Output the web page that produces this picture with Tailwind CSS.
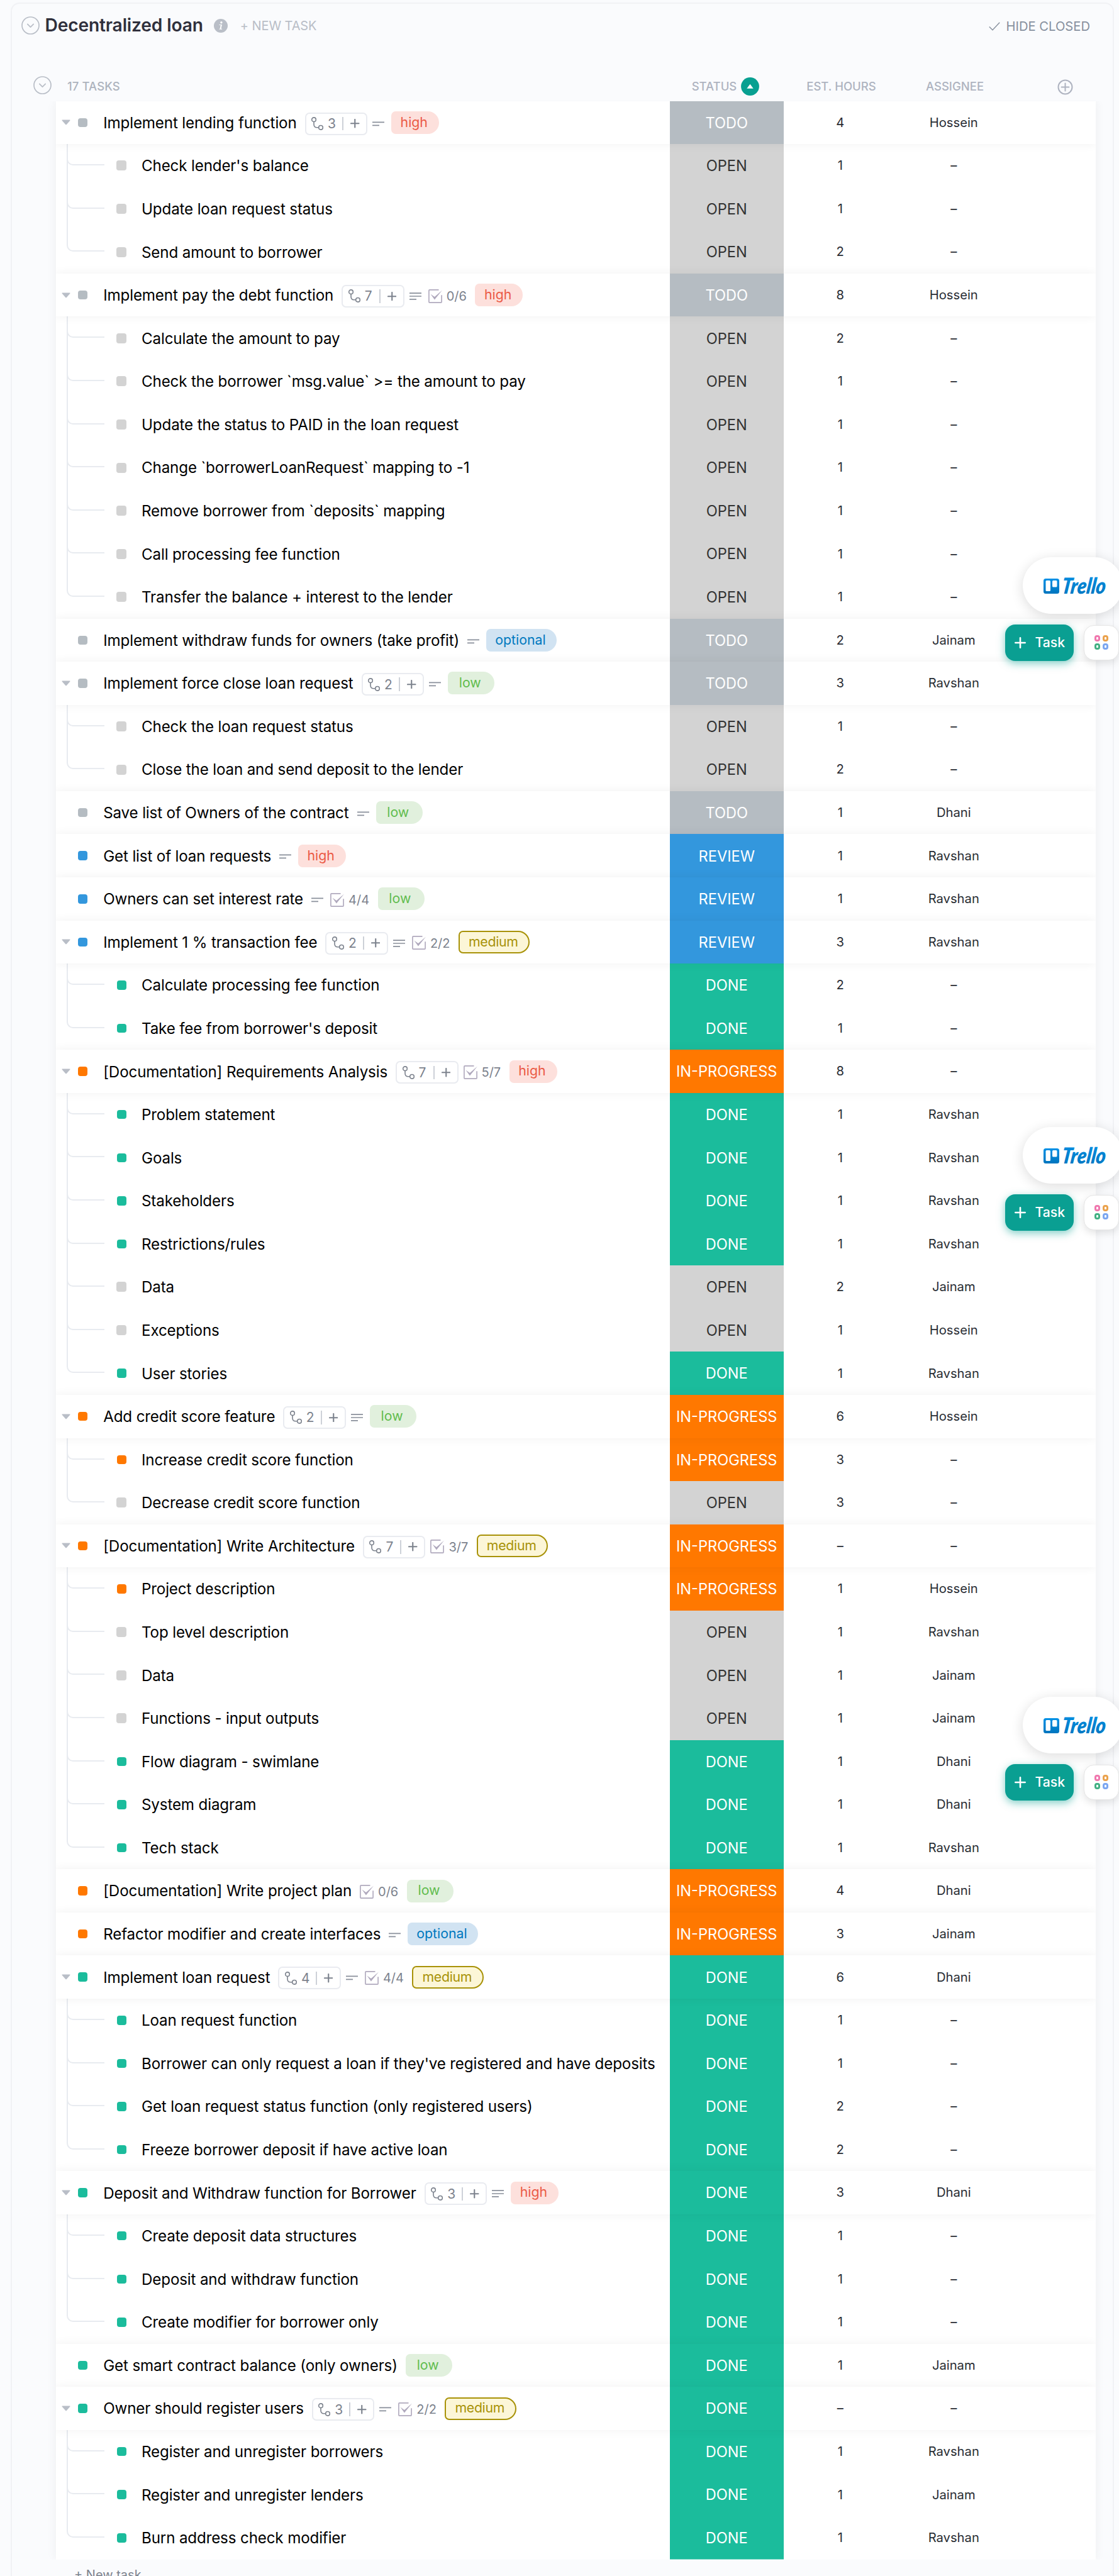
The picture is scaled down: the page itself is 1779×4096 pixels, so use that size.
<!DOCTYPE html>
<html lang="en">
<head>
<meta charset="utf-8">
<title>Decentralized loan</title>
<script src="https://cdn.jsdelivr.net/npm/@tailwindcss/browser@4"></script>
</head>
<body class="relative h-[4096px] w-[1779px] overflow-hidden bg-[#fafbfd] font-['Inter','Liberation_Sans',sans-serif]">
<main class="ml-[17px] mt-[4px] flex h-[4110px] w-[1754px] flex-col rounded-[14px] border-2 border-[#f1f2f5]">
  <header class="flex h-[69px] shrink-0 items-center pl-[15px] pr-[36px]">
    <svg class="size-[29px] shrink-0" viewBox="0 0 29 29" fill="none" stroke="#b9bec7" stroke-width="1.7"><circle cx="14.5" cy="14.5" r="13.5"/><path d="M9.8 12.3l4.7 4.8 4.7-4.8" stroke-linecap="round" stroke-linejoin="round"/></svg>
    <h1 class="ml-[8.500px] whitespace-nowrap text-[28.2px] font-semibold leading-none tracking-[-0.16px] text-[#30303c]">Decentralized loan</h1>
    <svg class="ml-[17px] size-[22px] shrink-0" viewBox="0 0 22 22"><circle cx="11" cy="11" r="11" fill="#b9bec7"/><circle cx="11.9" cy="5.7" r="1.7" fill="#fff"/><path d="M8.6 9h4.4l-1.5 6.7h1.6v1.1H8.5l.3-1.1h.8l1.2-5.6H8.4z" fill="#fff"/></svg>
    <span class="ml-[20px] whitespace-nowrap text-[20px] leading-none tracking-[-0.1px] text-[#b9bec7]">+ NEW TASK</span>
    <div class="ml-auto mt-[4px] flex items-center gap-[10px] text-[20.2px] leading-none text-[#87909e]">
      <svg class="h-[14px] w-[18px]" viewBox="0 0 18 14" fill="none" stroke="#87909e" stroke-width="1.4"><path d="M.8 7.5L6 12.8 17.2.8"/></svg>
      <span>HIDE CLOSED</span>
    </div>
  </header>
  <div class="mt-[42px] flex h-[43.6px] shrink-0 items-start text-[18.5px] font-medium leading-[30px] text-[#adb3bd]">
    <svg class="ml-[33.5px] mt-[4px] size-[29px] shrink-0" viewBox="0 0 29 29" fill="none" stroke="#b9bec7" stroke-width="1.7"><circle cx="14.5" cy="14.5" r="13.5"/><path d="M9.8 12.3l4.7 4.8 4.7-4.8" stroke-linecap="round" stroke-linejoin="round"/></svg>
    <span class="mt-[5px] w-[984px] shrink-0 pl-[25.5px] tracking-[0.1px]">17 TASKS</span>
    <div class="mt-[5px] flex w-[176px] shrink-0 items-center justify-center gap-[7px] text-[#aeb3c0]">STATUS
      <svg class="size-[29px]" viewBox="0 0 29 29"><circle cx="14.5" cy="14.5" r="14.4" fill="#08a091"/><path d="M14.5 10.8l5.2 7H9.3z" fill="#fff"/></svg>
    </div>
    <span class="mt-[5px] w-[192px] shrink-0 text-center text-[#aeb3c0]">EST. HOURS</span>
    <span class="mt-[5px] w-[169px] shrink-0 text-center text-[#aeb3c0]">ASSIGNEE</span>
    <svg class="ml-[78.5px] mt-[9px] size-[25px] shrink-0" viewBox="0 0 25 25" fill="none" stroke="#aeb3c0" stroke-width="2"><circle cx="12.5" cy="12.5" r="11"/><path d="M12.5 6.6v11.8M6.6 12.5h11.8" stroke-linecap="round"/></svg>
  </div>
  <section class="ml-[69.5px] w-[1653px] shrink-0 bg-white shadow-[0_0_16px_rgba(0,0,0,0.055)] [clip-path:inset(0_-20px)]">
    <div id="rows" class="overflow-hidden"></div>
  </section>
  <p class="ml-[99px] mt-[10px] text-[20px] leading-[28px] text-[#7c828d]">+ New task</p>
</main>
<div id="float"></div>

<script>
const STATUS = {
  T: ['TODO', 'bg-[#b5bcc2]', 'text-white'],
  O: ['OPEN', 'bg-[#d3d3d3]', 'text-[#333333]'],
  R: ['REVIEW', 'bg-[#3397dd]', 'text-white'],
  P: ['IN-PROGRESS', 'bg-[#ff7800]', 'text-white'],
  D: ['DONE', 'bg-[#1bbc9c]', 'text-white']
};
const TAG = {
  high: 'bg-[#fde0dc] text-[#eb5a46] pl-[14.5px] pr-[18px]',
  low: 'bg-[#e1f0dd] text-[#61bd4f] pl-[14.5px] pr-[18px]',
  optional: 'bg-[#d1e3f2] text-[#0079bf] pl-[14px] pr-[17.5px]',
  medium: 'bg-[#fcf6d7] text-[#a89208] border-2 border-[#a89208] pl-[14px] pr-[16.5px] tracking-[-0.3px]'
};
// Top-level task: [status, title, hours, assignee, {subtasks, description lines, checklist, tag}, children]
const H = 'Hossein', J = 'Jainam', V = 'Ravshan', D = 'Dhani', N = '–';
const TASKS = [
  ['T', 'Implement lending function', 4, H, {s: 3, l: 2, t: 'high'}, [
    ['O', "Check lender's balance", 1, N], ['O', 'Update loan request status', 1, N], ['O', 'Send amount to borrower', 2, N]]],
  ['T', 'Implement pay the debt function', 8, H, {s: 7, l: 3, c: '0/6', t: 'high'}, [
    ['O', 'Calculate the amount to pay', 2, N], ['O', 'Check the borrower `msg.value` &gt;= the amount to pay', 1, N],
    ['O', 'Update the status to PAID in the loan request', 1, N], ['O', 'Change `borrowerLoanRequest` mapping to -1', 1, N],
    ['O', 'Remove borrower from `deposits` mapping', 1, N], ['O', 'Call processing fee function', 1, N],
    ['O', 'Transfer the balance + interest to the lender', 1, N]]],
  ['T', 'Implement withdraw funds for owners (take profit)', 2, J, {l: 2, t: 'optional'}, []],
  ['T', 'Implement force close loan request', 3, V, {s: 2, l: 2, t: 'low'}, [
    ['O', 'Check the loan request status', 1, N], ['O', 'Close the loan and send deposit to the lender', 2, N]]],
  ['T', 'Save list of Owners of the contract', 1, D, {l: 2, t: 'low'}, []],
  ['R', 'Get list of loan requests', 1, V, {l: 2, t: 'high'}, []],
  ['R', 'Owners can set interest rate', 1, V, {l: 2, c: '4/4', t: 'low'}, []],
  ['R', 'Implement 1 % transaction fee', 3, V, {s: 2, l: 3, c: '2/2', t: 'medium'}, [
    ['D', 'Calculate processing fee function', 2, N], ['D', "Take fee from borrower's deposit", 1, N]]],
  ['P', '[Documentation] Requirements Analysis', 8, N, {s: 7, c: '5/7', t: 'high'}, [
    ['D', 'Problem statement', 1, V], ['D', 'Goals', 1, V], ['D', 'Stakeholders', 1, V], ['D', 'Restrictions/rules', 1, V],
    ['O', 'Data', 2, J], ['O', 'Exceptions', 1, H], ['D', 'User stories', 1, V]]],
  ['P', 'Add credit score feature', 6, H, {s: 2, l: 3, t: 'low'}, [
    ['P', 'Increase credit score function', 3, N], ['O', 'Decrease credit score function', 3, N]]],
  ['P', '[Documentation] Write Architecture', N, N, {s: 7, c: '3/7', t: 'medium'}, [
    ['P', 'Project description', 1, H], ['O', 'Top level description', 1, V], ['O', 'Data', 1, J],
    ['O', 'Functions - input outputs', 1, J], ['D', 'Flow diagram - swimlane', 1, D], ['D', 'System diagram', 1, D], ['D', 'Tech stack', 1, V]]],
  ['P', '[Documentation] Write project plan', 4, D, {c: '0/6', t: 'low'}, []],
  ['P', 'Refactor modifier and create interfaces', 3, J, {l: 2, t: 'optional'}, []],
  ['D', 'Implement loan request', 6, D, {s: 4, l: 2, c: '4/4', t: 'medium'}, [
    ['D', 'Loan request function', 1, N], ['D', "Borrower can only request a loan if they've registered and have deposits", 1, N],
    ['D', 'Get loan request status function (only registered users)', 2, N], ['D', 'Freeze borrower deposit if have active loan', 2, N]]],
  ['D', 'Deposit and Withdraw function for Borrower', 3, D, {s: 3, l: 3, t: 'high'}, [
    ['D', 'Create deposit data structures', 1, N], ['D', 'Deposit and withdraw function', 1, N], ['D', 'Create modifier for borrower only', 1, N]]],
  ['D', 'Get smart contract balance (only owners)', 1, J, {t: 'low'}, []],
  ['D', 'Owner should register users', N, N, {s: 3, l: 2, c: '2/2', t: 'medium'}, [
    ['D', 'Register and unregister borrowers', 1, V], ['D', 'Register and unregister lenders', 1, J], ['D', 'Burn address check modifier', 1, V]]]
];

const subtaskBox = n => `
  <div class="mr-[8px] mt-[3.5px] flex h-[36px] w-[99.5px] items-center rounded-[7px] border-2 border-[#e9ebf0] pl-[8.5px] pr-[10.5px] text-[21px] text-[#7c828d]">
    <svg class="h-[21px] w-[19px] shrink-0" viewBox="0 0 19 21" fill="none" stroke="#7c828d" stroke-width="1.6"><circle cx="4" cy="4.2" r="3.3"/><circle cx="15" cy="16.8" r="3.3"/><path d="M4 7.5v4.3c0 3.2 1.8 5 5 5h2.7"/></svg>
    <span class="ml-[7px] leading-none">${n}</span>
    <span class="ml-auto h-[21.6px] w-[2px] shrink-0 bg-[#cdd1d8]"></span>
    <svg class="ml-[11px] size-[14.5px] shrink-0" viewBox="0 0 14.5 14.5" stroke="#7c828d" stroke-width="2.1" stroke-linecap="round"><path d="M7.25 1v12.5M1 7.25h12.5"/></svg>
  </div>`;
const lines = n => `
  <svg class="mr-[11px] mt-[3.5px] h-[14px] w-[19px]" viewBox="0 0 19 14" fill="none" stroke="#8a909b" stroke-width="1.7">
    <path d="${n === 3 ? 'M0 2.2h19M0 7h19M0 11.8h11' : 'M0 4.4h19M0 9.4h11'}"/></svg>`;
const checklist = t => `
  <svg class="mt-[3px] h-[22px] w-[22px]" viewBox="0 0 24 24" fill="none"><path d="M18 1H2.2Q1 1 1 2.2V21.8Q1 23 2.2 23H21.8Q23 23 23 21.8V10" stroke="#b0a9bd" stroke-width="1.8"/><path d="M3.8 8.3L10.8 13.2 24 1.6 10.8 18z" fill="#b0a9bd"/></svg>
  <span class="ml-[7px] mr-[13.5px] mt-[3.5px] text-[20px] leading-none text-[#7c828d]">${t}</span>`;
const tag = t => `
  <span class="flex h-[36px] min-w-[74px] items-center justify-center rounded-l-[7px] rounded-r-[18px] pb-px text-[21.3px] leading-none ${TAG[t]}">${t}</span>`;

const cells = (s, h, a) => `
  <div class="flex w-[180.5px] items-center justify-center pt-px text-[23.6px] ${STATUS[s][1]} ${STATUS[s][2]}">${STATUS[s][0]}</div>
  <div class="flex w-[180.5px] items-center justify-center text-[20.2px] text-[#292d34]">${h}</div>
  <div class="flex w-[180.5px] items-center justify-center text-[20.2px] text-[#292d34]">${a}</div>
  <div class="w-[135px]"></div>`;

let html = '';
for (const [s, title, h, a, o, kids] of TASKS) {
  html += `<div class="relative z-10 flex h-[68.58px] bg-white shadow-[0_0_15px_rgba(0,0,0,0.06)]">
    <div class="flex flex-1 items-center whitespace-nowrap">
      <svg class="ml-[9.5px] h-[9px] w-[14px] ${kids.length ? '' : 'invisible'}" viewBox="0 0 14 9" fill="#b9bec7"><path d="M1.2.5h11.6Q14 .6 13.3 1.7L7.8 8Q7 8.8 6.2 8L.7 1.7Q0 .6 1.2.5z"/></svg>
      <span class="ml-[12.2px] size-[14.5px] rounded-[4px] ${STATUS[s][1]}"></span>
      <span class="ml-[25.5px] mr-[13px] mt-[2px] text-[24.2px] leading-none tracking-[-0.16px] text-black">${title}</span>
      ${o.s ? subtaskBox(o.s) : ''}${o.l ? lines(o.l) : ''}${o.c ? checklist(o.c) : ''}${tag(o.t)}
    </div>${cells(s, h, a)}</div>`;
  kids.forEach(([ks, kt, kh, ka], i) => {
    html += `<div class="flex h-[68.58px] bg-white">
      <div class="flex flex-1 items-center whitespace-nowrap">
        <div class="ml-[17px] w-[60.5px] self-stretch border-l-2 ${i < kids.length - 1 ? 'border-[#e8ebf0]' : 'border-transparent'}">
          <div class="-ml-[2px] h-[34px] rounded-bl-[10px] border-b-2 border-l-2 border-[#e8ebf0]"></div>
        </div>
        <span class="ml-[19px] flex w-[16.5px] justify-center"><span class="${ks === 'O' ? 'size-[16px]' : 'size-[14.5px]'} rounded-[4px] ${STATUS[ks][1]}"></span></span>
        <span class="ml-[23.5px] mt-[2px] text-[24.2px] leading-none tracking-[-0.16px] text-black">${kt}</span>
      </div>${cells(ks, kh, ka)}</div>`;
  });
}
document.getElementById('rows').innerHTML = html;

// Floating dock, repeated down the page
document.getElementById('float').innerHTML = [886, 1792, 2698].map((y, i) => `
<div class="absolute left-[1598px] z-20 flex w-[190px] flex-col" style="top:${y}px">
  <div class="ml-[28px] flex h-[90px] w-[159px] items-center rounded-full bg-white pl-[33px] shadow-[0_4px_20px_rgba(0,0,0,0.14)]">
    <svg class="h-[36px] w-[108px]" viewBox="0 0 108 36">
      <defs><linearGradient id="g${i}" x1="0" y1="0" x2="0" y2="1"><stop offset="0" stop-color="#0091e6"/><stop offset="1" stop-color="#0075be"/></linearGradient></defs>
      <rect x="0" y="7" width="25" height="24" rx="3.5" fill="url(#g${i})"/><rect x="3.5" y="10" width="7.5" height="17" rx="1.5" fill="#fff"/><rect x="14" y="10" width="7.5" height="10.5" rx="1.5" fill="#fff"/>
      <text x="32" y="31" font-family="Lato, sans-serif" font-size="35" font-weight="800" font-style="italic" textLength="70" lengthAdjust="spacingAndGlyphs" transform="skewX(-8)" fill="url(#g${i})">Trello</text>
    </svg>
  </div>
  <div class="mt-[16.5px] flex items-center">
    <div class="flex h-[58px] w-[109px] items-center rounded-[16px] bg-[#0a9f92] pl-[15px] text-[21.2px] font-medium text-white shadow-[0_4px_13px_rgba(10,159,146,0.5)]">
      <svg class="mr-[14.5px] size-[18px]" viewBox="0 0 18 18" stroke="#fff" stroke-width="2.6" stroke-linecap="round"><path d="M9 1.3v15.4M1.3 9h15.4"/></svg>Task
    </div>
    <div class="ml-[16px] grid size-[56px] grid-cols-[9.4px_9.4px] place-content-center gap-[3.6px] rounded-[16px] border border-[#e6e6e6] bg-white shadow-[0_4px_13px_rgba(0,0,0,0.12)]">
      <span class="size-[9.4px] rounded-[4px] border-[3px] border-[#f077ae]"></span><span class="size-[9.4px] rounded-[4px] border-[3px] border-[#eaa24c]"></span>
      <span class="size-[9.4px] rounded-[4px] border-[3px] border-[#42b083]"></span><span class="size-[9.4px] rounded-[4px] border-[3px] border-[#7ba6f0]"></span>
    </div>
  </div>
</div>`).join('');
</script>
</body>
</html>
